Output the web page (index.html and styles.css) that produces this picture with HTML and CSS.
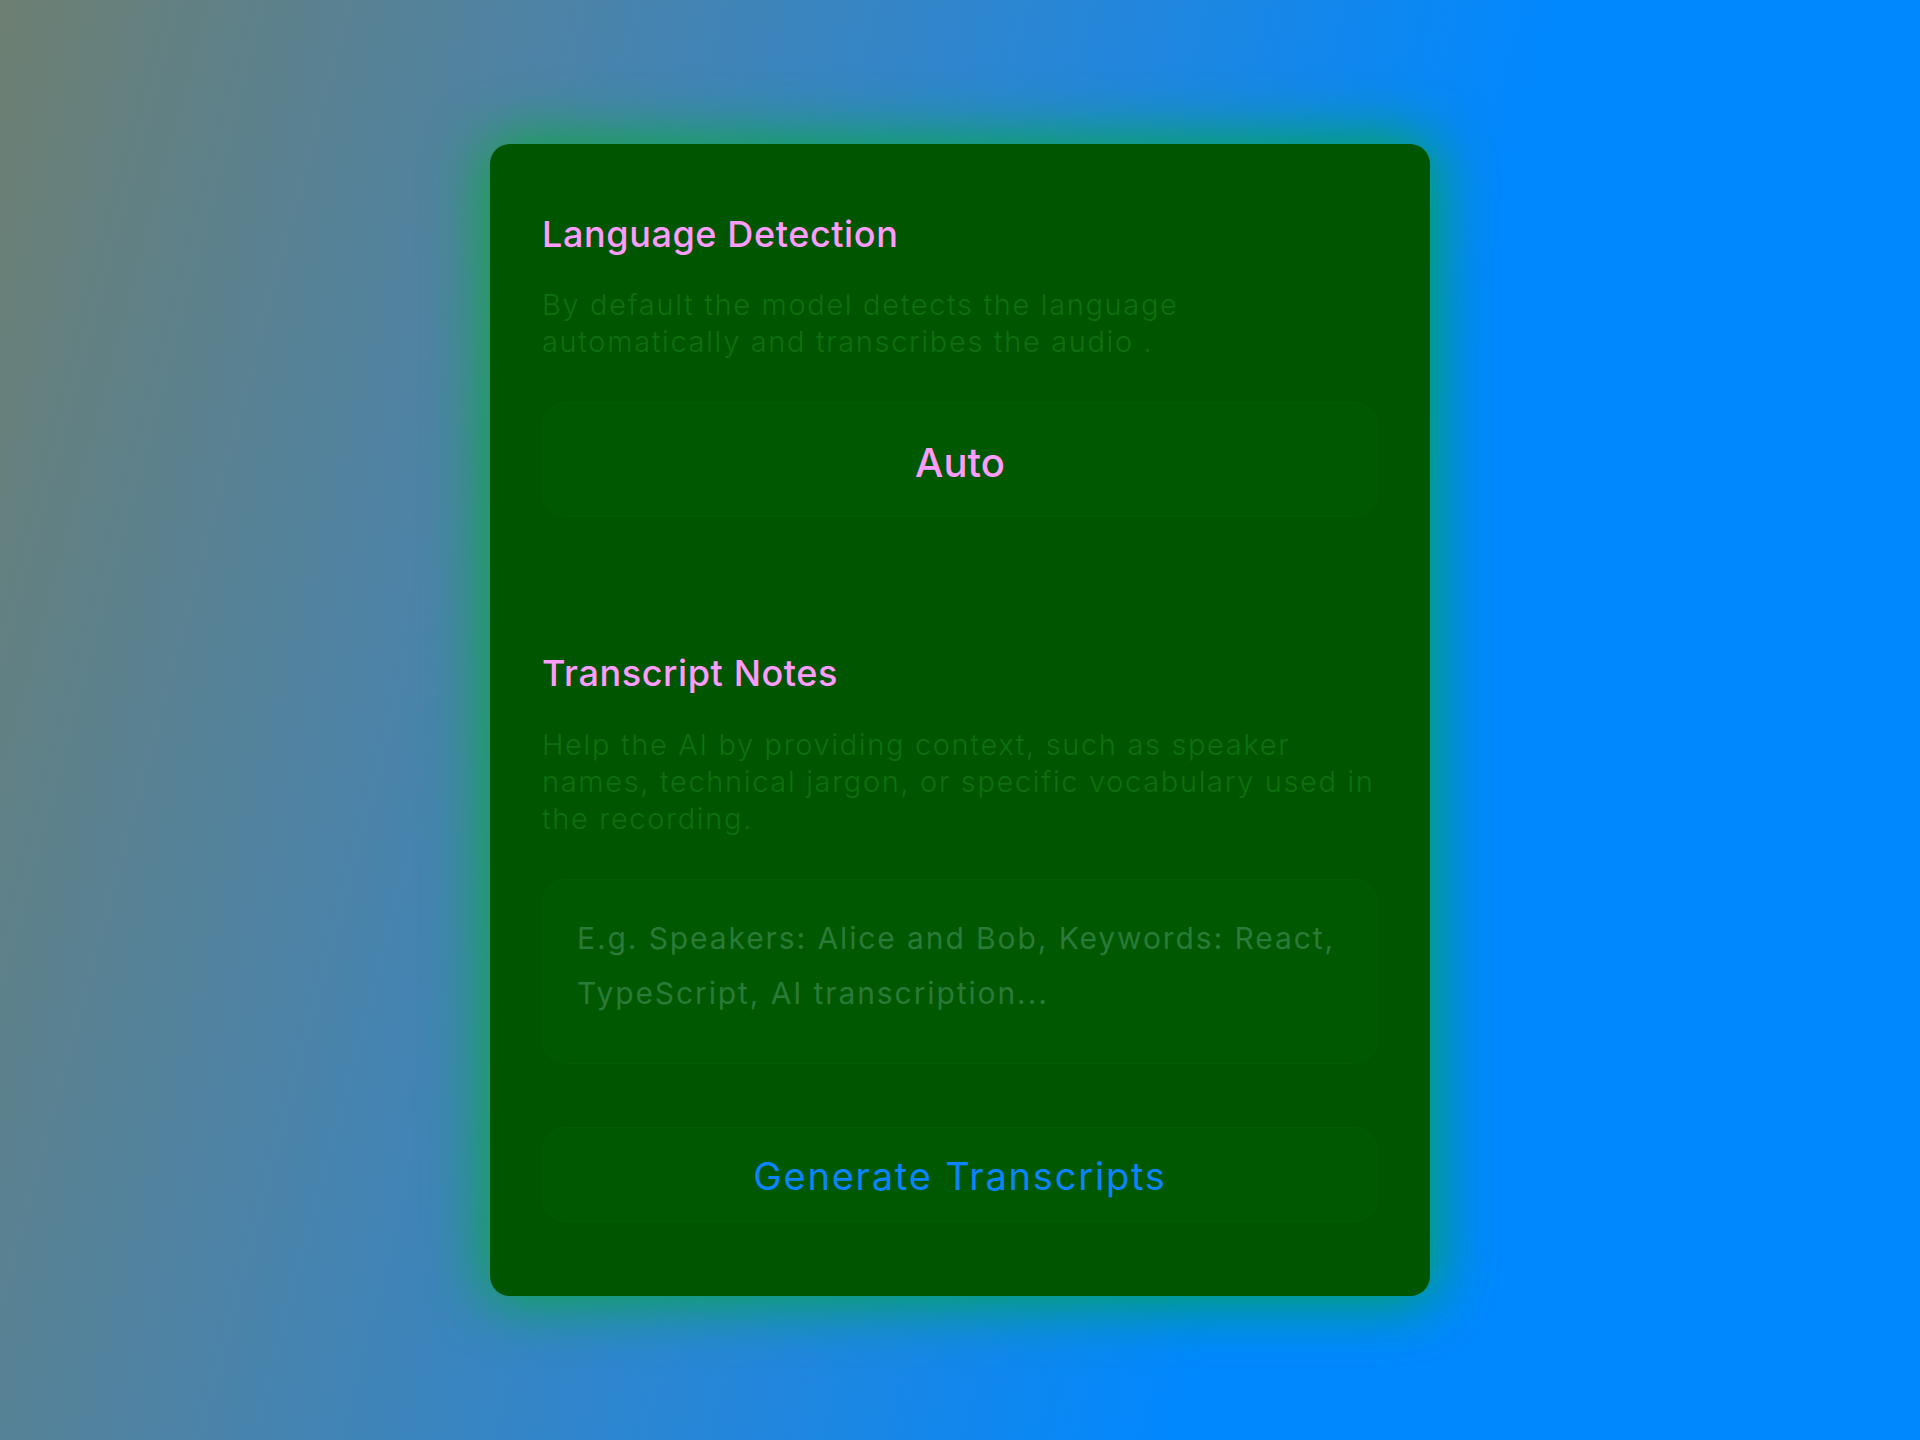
FILE: index.html
```html
<!doctype html>
<html lang="en">
<head>
	<meta charset="utf-8">
	<meta name="viewport" content="width=device-width, initial-scale=1.0">
	<title>Transcript settings</title>
	<link rel="stylesheet" href="styles.css">
</head>
<body>
	<div class="panel">
		<h2 class="panel-title">Language Detection</h2>
		<p class="panel-desc">By default the model detects the language automatically and transcribes the audio .</p>
		<button class="lang-select" type="button">Auto</button>

		<h2 class="panel-title panel-title-notes">Transcript Notes</h2>
		<p class="panel-desc">Help the AI by providing context, such as speaker names, technical jargon, or specific vocabulary used in the recording.</p>
		<textarea class="notes" placeholder="E.g. Speakers: Alice and Bob, Keywords: React, TypeScript, AI transcription..."></textarea>

		<button class="generate" type="button">Generate Transcripts</button>
	</div>
</body>
</html>
```

FILE: styles.css
```css
* {
	box-sizing: border-box;
}
html,
body {
	height: 100%;
}
body {
	margin: 0;
	display: flex;
	align-items: center;
	justify-content: center;
	font-family: Inter, "Noto Sans", sans-serif;
	background: linear-gradient(105deg, #6d7f71 0%, #4d83a6 24%, #2a86d4 45%, #0088ff 68%);
}

.panel {
	width: 940px;
	padding: 68px 52px 74px;
	display: flex;
	flex-direction: column;
	background-color: #005500;
	border-radius: 20px;
	box-shadow: 0 0 60px 6px rgba(0, 175, 40, .8);
}
.panel-title {
	margin: 0 0 30px;
	font-size: 36px;
	line-height: 44px;
	font-weight: 500;
	letter-spacing: .6px;
	color: #ff9cff;
}
.panel-title-notes {
	margin-top: 134px;
	margin-bottom: 31px;
}
.panel-desc {
	margin: 0;
	font-size: 29px;
	line-height: 37px;
	font-weight: 300;
	letter-spacing: 1.65px;
	color: #0f700f;
}

.lang-select,
.notes,
.generate {
	width: 100%;
	background-color: #005800;
	border: 1px solid #005e01;
	border-radius: 24px;
	font-family: inherit;
}
.lang-select {
	margin-top: 42px;
	height: 115px;
	padding-top: 6px;
	font-size: 40px;
	font-weight: 500;
	color: #ff9cff;
}
.notes {
	margin-top: 42px;
	height: 185px;
	padding: 31px 34px;
	resize: none;
	font-size: 30px;
	line-height: 55px;
	letter-spacing: 1.9px;
	color: #2d7a3d;
	outline: none;
}
.notes::placeholder {
	color: #2b7a3a;
}
.generate {
	margin-top: 63px;
	height: 95px;
	padding-top: 4px;
	font-size: 38px;
	letter-spacing: 1.8px;
	color: #0a84ff;
}
```
